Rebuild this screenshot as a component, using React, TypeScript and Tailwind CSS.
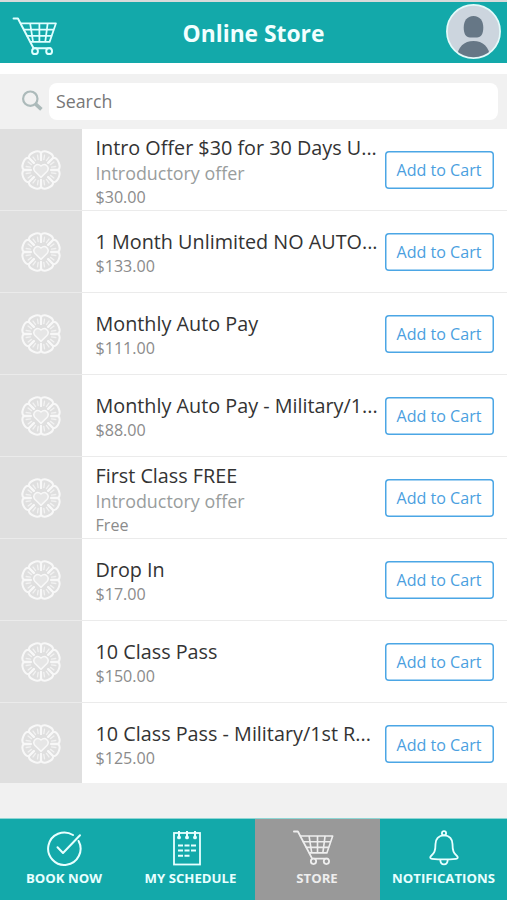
import React from "react";

type Product = { name: string; note?: string; price: string };

const products: Product[] = [
  { name: "Intro Offer $30 for 30 Days U...", note: "Introductory offer", price: "$30.00" },
  { name: "1 Month Unlimited NO AUTO...", price: "$133.00" },
  { name: "Monthly Auto Pay", price: "$111.00" },
  { name: "Monthly Auto Pay - Military/1...", price: "$88.00" },
  { name: "First Class FREE", note: "Introductory offer", price: "Free" },
  { name: "Drop In", price: "$17.00" },
  { name: "10 Class Pass", price: "$150.00" },
  { name: "10 Class Pass - Military/1st R...", price: "$125.00" },
];

function CartIcon({ className }: { className: string }) {
  return (
    <svg viewBox="0 0 46 40" className={className} fill="none" stroke="currentColor" strokeLinecap="round" strokeLinejoin="round">
      <path d="M1 1.5H5.5L21.5 32H39" strokeWidth="2" />
      <path d="M8.5 6.5H44.5L38 25.5H18.5M11.5 13H42.3M15 19.3H40.3M18 6.5L21 25.5M27.5 6.5V25.5M36 6.5L33.5 25.5" strokeWidth="1.8" />
      <circle cx="23" cy="35" r="3" fill="var(--hole)" strokeWidth="2" />
      <circle cx="37.5" cy="35" r="3" fill="var(--hole)" strokeWidth="2" />
    </svg>
  );
}

const petals = [0, 45, 90, 135, 180, 225, 270, 315];

function Emblem() {
  return (
    <svg viewBox="-21 -21 42 42" className="h-[42px] w-[42px] text-[#f8f8f8]" fill="none" stroke="currentColor" strokeLinecap="round">
      {petals.map((a) => (
        <g key={a} transform={`rotate(${a + 22.5})`}>
          <path d="M-4 -9.3L-6.6 -15.6C-5.5 -20.4 5.5 -20.4 6.6 -15.6L4 -9.3" strokeWidth="2" />
          <path d="M-1.4 -10.8L-2.4 -15M1.4 -10.8L2.4 -15" strokeWidth="1.4" opacity="0.75" />
        </g>
      ))}
      <path d="M0 7.4L-6.2 1.2C-9 -2.5 -4.6 -8 0 -4C4.6 -8 9 -2.5 6.2 1.2Z" fill="#e6e6e6" strokeWidth="1.5" />
    </svg>
  );
}

function CheckIcon() {
  return (
    <svg viewBox="0 0 36 36" className="h-9 w-9" fill="none" stroke="currentColor" strokeWidth="2" strokeLinecap="round" strokeLinejoin="round">
      <path d="M27 5A16.2 16.2 0 1 0 32.6 11" />
      <path d="M11.5 17.3L17 23L34 5.3" />
    </svg>
  );
}

function ScheduleIcon() {
  return (
    <svg viewBox="0 0 36 36" className="-ml-2 h-9 w-9" fill="none" stroke="currentColor" strokeLinecap="butt">
      <rect x="5" y="3" width="26" height="31.5" strokeWidth="1.8" />
      <path d="M10 1V7M18 1V7M26 1V7" strokeWidth="2" />
      <g fill="currentColor" stroke="none">
        <circle cx="10" cy="7.4" r="1.9" />
        <circle cx="18" cy="7.4" r="1.9" />
        <circle cx="26" cy="7.4" r="1.9" />
      </g>
      <path d="M9 15.5H27M9 20.5H27" strokeWidth="2" strokeDasharray="5 1.5" />
      <path d="M9 25.7H20.5" strokeWidth="2" strokeDasharray="5 1.5" />
    </svg>
  );
}

function BellIcon() {
  return (
    <svg viewBox="0 0 36 36" className="h-9 w-9" fill="none" stroke="currentColor" strokeWidth="1.8" strokeLinejoin="round">
      <circle cx="18" cy="3.2" r="2.1" />
      <path d="M18 5.3C12.5 5.3 9.5 9.5 9.5 14C9.5 21 8.3 23.2 4.8 26.2C3.6 27.5 4.3 28.7 6 28.8C14 29.6 22 29.6 30 28.8C31.7 28.7 32.4 27.5 31.2 26.2C27.7 23.2 26.5 21 26.5 14C26.5 9.5 23.5 5.3 18 5.3Z" />
      <path d="M14.3 29.5C14.3 36 21.7 36 21.7 29.5" />
    </svg>
  );
}

function ProductRow({ product, last }: { product: Product; last: boolean }) {
  return (
    <li className={`flex ${last ? "h-20" : "h-[82px] border-b border-[#ebebeb]"}`}>
      <div className="flex w-[82px] shrink-0 items-center justify-center bg-[#dfdfdf] pt-px">
        <Emblem />
      </div>
      <div className="flex min-w-0 flex-1 flex-col justify-center whitespace-nowrap pl-[13.5px] pt-[3px]">
        <div className="text-[19.8px] leading-[26px] text-[#333333]">{product.name}</div>
        {product.note && <div className="text-[17.9px] leading-[25px] text-[#999d9d]">{product.note}</div>}
        <div className="text-[16.1px] leading-[22px] text-[#8b8b8b]">{product.price}</div>
      </div>
      <div className={`flex shrink-0 items-center pr-[13px] ${last ? "pt-[2px]" : ""}`}>
        <button className="h-[38px] w-[109px] rounded-[4px] pr-px pt-[2px] text-[16.1px] text-[#4b9fe0] shadow-[inset_0_0_0_1.5px_#4ba6e5]">
          Add to Cart
        </button>
      </div>
    </li>
  );
}

export default function App() {
  return (
    <div className="flex h-[900px] w-[507px] flex-col overflow-hidden bg-[#f1f1f1] font-['Open_Sans','Noto_Sans',sans-serif]">
      <header className="grid h-[63px] shrink-0 grid-cols-[100px_1fr_100px] items-center border-t-2 border-[#d8dada] bg-[#13a9aa]">
        <div className="pl-[11.5px] pt-2 text-[#e0ffff] [--hole:#13a9aa]">
          <CartIcon className="h-[39px] w-[46px]" />
        </div>
        <h1 className="pt-[3px] text-center text-[22.8px] font-bold text-[#f2ffff]">Online Store</h1>
        <div className="flex justify-end pb-[3px] pr-[6px]">
          <svg viewBox="0 0 55 55" className="h-[55px] w-[55px]">
            <defs>
              <clipPath id="avatar"><circle cx="27.5" cy="27.5" r="25.7" /></clipPath>
            </defs>
            <circle cx="27.5" cy="27.5" r="26.6" fill="#ccd5de" stroke="#e4fafa" strokeWidth="1.7" />
            <g fill="#667786" clipPath="url(#avatar)">
              <path d="M27.5 12C34 12 37.3 17 37.3 23.5C37.3 30 35 33.5 31 33.5H24C20 33.5 17.7 30 17.7 23.5C17.7 17 21 12 27.5 12Z" />
              <path d="M11 55C11 43 18 37 27.5 37C37 37 44 43 44 55Z" />
            </g>
          </svg>
        </div>
      </header>
      <div className="h-[11px] shrink-0 bg-white" />
      <div className="flex h-[55px] shrink-0 items-center pb-px pl-[21px] pr-[9px]">
        <svg viewBox="0 0 22 22" className="mr-[6px] h-[22px] w-[22px]" fill="none" stroke="#acbaba">
          <circle cx="9.3" cy="8.7" r="7.2" strokeWidth="2.2" />
          <path d="M14.4 13.8L20.4 19.3" strokeWidth="3.6" />
        </svg>
        <div className="flex h-[37px] flex-1 items-center rounded-[8px] bg-white pl-[7px] text-[17.8px] text-[#777777]">Search</div>
      </div>
      <ul className="shrink-0 bg-white">
        {products.map((p, i) => (
          <ProductRow key={p.name} product={p} last={i === products.length - 1} />
        ))}
      </ul>
      <nav className="mt-auto grid h-[82px] shrink-0 grid-cols-[128px_127px_125px_127px] border-t border-[#8fd6d4] bg-[#13a9aa] text-[13.2px] font-bold text-[#e8ffff] [--hole:#13a9aa]">
        <div className="flex flex-col items-center pt-[11px]">
          <CheckIcon />
          <span className="mt-[3px] leading-[18px]">BOOK NOW</span>
        </div>
        <div className="flex flex-col items-center pr-[2px] pt-[11px]">
          <ScheduleIcon />
          <span className="mt-[3px] whitespace-nowrap leading-[18px]">MY SCHEDULE</span>
        </div>
        <div className="flex flex-col items-center bg-[#999999] pr-px pt-[11px] text-[#eeeeee] [--hole:#999999]">
          <CartIcon className="-ml-2 h-9 w-[41px]" />
          <span className="mt-[3px] leading-[18px]">STORE</span>
        </div>
        <div className="flex flex-col items-center pt-[11px]">
          <BellIcon />
          <span className="mt-[3px] leading-[18px]">NOTIFICATIONS</span>
        </div>
      </nav>
    </div>
  );
}
